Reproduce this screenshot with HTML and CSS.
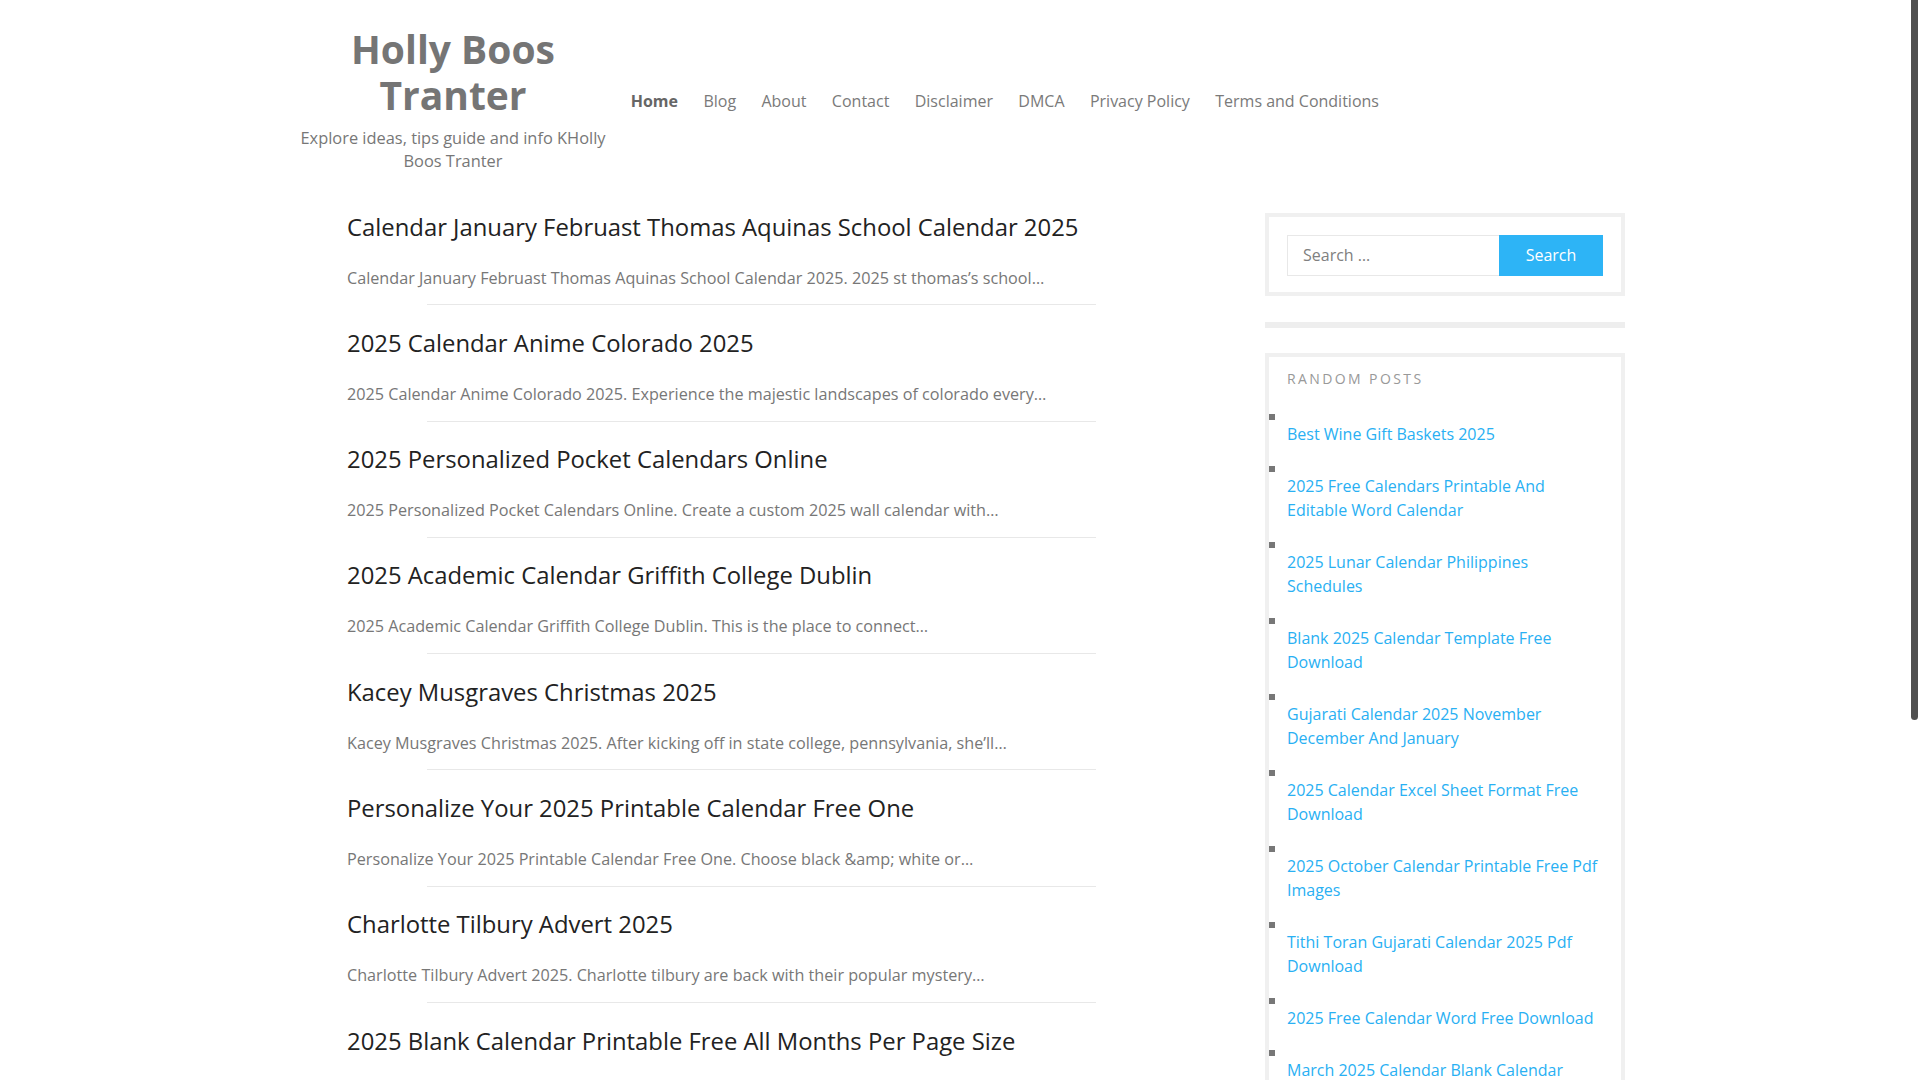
FILE: index.html
```html
<!DOCTYPE html>
<html lang="en">
<head>
<meta charset="utf-8">
<title>Holly Boos Tranter</title>
<link rel="stylesheet" href="styles.css">
</head>
<body>
<div class="scroll-thumb" aria-hidden="true"></div>
<div class="page">
  <header class="site-header">
    <div class="branding">
      <h1 class="site-title"><a href="#">Holly Boos Tranter</a></h1>
      <p class="site-desc">Explore ideas, tips guide and info KHolly Boos Tranter</p>
    </div>
    <nav class="main-nav">
      <ul>
        <li class="current"><a href="#">Home</a></li>
        <li><a href="#">Blog</a></li>
        <li><a href="#">About</a></li>
        <li><a href="#">Contact</a></li>
        <li><a href="#">Disclaimer</a></li>
        <li><a href="#">DMCA</a></li>
        <li><a href="#">Privacy Policy</a></li>
        <li><a href="#">Terms and Conditions</a></li>
      </ul>
    </nav>
  </header>

  <div class="content">
    <main class="posts">
      <article class="post">
        <h2 class="post-title"><a href="#">Calendar January Februast Thomas Aquinas School Calendar 2025</a></h2>
        <p class="excerpt">Calendar January Februast Thomas Aquinas School Calendar 2025. 2025 st thomas’s school…</p>
        <hr class="sep">
      </article>
      <article class="post">
        <h2 class="post-title"><a href="#">2025 Calendar Anime Colorado 2025</a></h2>
        <p class="excerpt">2025 Calendar Anime Colorado 2025. Experience the majestic landscapes of colorado every…</p>
        <hr class="sep">
      </article>
      <article class="post">
        <h2 class="post-title"><a href="#">2025 Personalized Pocket Calendars Online</a></h2>
        <p class="excerpt">2025 Personalized Pocket Calendars Online. Create a custom 2025 wall calendar with…</p>
        <hr class="sep">
      </article>
      <article class="post">
        <h2 class="post-title"><a href="#">2025 Academic Calendar Griffith College Dublin</a></h2>
        <p class="excerpt">2025 Academic Calendar Griffith College Dublin. This is the place to connect…</p>
        <hr class="sep">
      </article>
      <article class="post">
        <h2 class="post-title"><a href="#">Kacey Musgraves Christmas 2025</a></h2>
        <p class="excerpt">Kacey Musgraves Christmas 2025. After kicking off in state college, pennsylvania, she’ll…</p>
        <hr class="sep">
      </article>
      <article class="post">
        <h2 class="post-title"><a href="#">Personalize Your 2025 Printable Calendar Free One</a></h2>
        <p class="excerpt">Personalize Your 2025 Printable Calendar Free One. Choose black &amp;amp; white or…</p>
        <hr class="sep">
      </article>
      <article class="post">
        <h2 class="post-title"><a href="#">Charlotte Tilbury Advert 2025</a></h2>
        <p class="excerpt">Charlotte Tilbury Advert 2025. Charlotte tilbury are back with their popular mystery…</p>
        <hr class="sep">
      </article>
      <article class="post">
        <h2 class="post-title"><a href="#">2025 Blank Calendar Printable Free All Months Per Page Size</a></h2>
        <p class="excerpt">2025 Blank Calendar Printable Free All Months Per Page Size. Download a free printable…</p>
        <hr class="sep">
      </article>
      <article class="post">
        <h2 class="post-title"><a href="#">2025 Wall Calendar With Holidays Printable</a></h2>
        <p class="excerpt">2025 Wall Calendar With Holidays Printable. Plan your year ahead with our…</p>
        <hr class="sep">
      </article>
      <article class="post">
        <h2 class="post-title"><a href="#">Lunar Calendar 2025 Chinese New Year</a></h2>
        <p class="excerpt">Lunar Calendar 2025 Chinese New Year. The year of the snake begins on…</p>
        <hr class="sep">
      </article>
      <article class="post">
        <h2 class="post-title"><a href="#">2025 Monthly Planner Calendar Template</a></h2>
        <p class="excerpt">2025 Monthly Planner Calendar Template. Stay organized all year long with…</p>
        <hr class="sep">
      </article>
      <article class="post">
        <h2 class="post-title"><a href="#">School Holidays 2025 Calendar Victoria</a></h2>
        <p class="excerpt">School Holidays 2025 Calendar Victoria. Find the key dates for term…</p>
        <hr class="sep">
      </article>
    </main>

    <aside class="sidebar">
      <section class="widget search-widget">
        <form class="search-form">
          <input class="search-field" type="search" placeholder="Search …">
          <button class="search-submit" type="button">Search</button>
        </form>
      </section>
      <div class="widget-bar"></div>
      <section class="widget random-widget">
        <h3 class="widget-title">Random Posts</h3>
        <ul class="random-list">
          <li><a href="#">Best Wine Gift Baskets 2025</a></li>
          <li><a href="#">2025 Free Calendars Printable And Editable Word Calendar</a></li>
          <li><a href="#">2025 Lunar Calendar Philippines Schedules</a></li>
          <li><a href="#">Blank 2025 Calendar Template Free Download</a></li>
          <li><a href="#">Gujarati Calendar 2025 November December And January</a></li>
          <li><a href="#">2025 Calendar Excel Sheet Format Free Download</a></li>
          <li><a href="#">2025 October Calendar Printable Free Pdf Images</a></li>
          <li><a href="#">Tithi Toran Gujarati Calendar 2025 Pdf Download</a></li>
          <li><a href="#">2025 Free Calendar Word Free Download</a></li>
          <li><a href="#">March 2025 Calendar Blank Calendar Printable</a></li>
          <li><a href="#">2025 Printable Calendar With Week Numbers</a></li>
          <li><a href="#">Hindu Calendar 2025 With Festivals Pdf</a></li>
        </ul>
      </section>
    </aside>
  </div>
</div>
</body>
</html>
```

FILE: styles.css
```css
html {
  background: #fff;
}
body {
  margin: 0;
  padding-right: 12px;
  font-family: "Open Sans", "Noto Sans", "Liberation Sans", sans-serif;
  font-size: 16px;
  color: #777;
  background: #fff;
}
a {
  text-decoration: none;
  color: inherit;
}
.scroll-thumb {
  position: fixed;
  top: 0;
  right: 2px;
  width: 7px;
  height: 720px;
  background: #505050;
  border-radius: 0 0 4px 4px;
}
.page {
  width: 1342px;
  margin: 0 auto;
  padding-bottom: 20px;
}
.site-header {
  display: flex;
  align-items: flex-start;
  padding: 26px 0 0 5px;
}
.branding {
  width: 330px;
  text-align: center;
}
.site-title {
  margin: 0;
  font-size: 39px;
  line-height: 46px;
  font-weight: 700;
  color: #757575;
}
.site-desc {
  margin: 8px 0 0;
  font-size: 16.4px;
  line-height: 23px;
  color: #777;
}
.main-nav {
  padding-top: 63px;
}
.main-nav ul {
  display: flex;
  list-style: none;
  margin: 0;
  padding: 0;
}
.main-nav li a {
  display: block;
  padding: 0 12.7px;
  line-height: 24px;
  font-size: 16px;
  color: #7a7a7a;
}
.main-nav li.current a {
  font-weight: 700;
  color: #666;
}
.content {
  display: grid;
  grid-template-columns: 813px 360px;
  column-gap: 169px;
  align-items: start;
  margin-top: 37.5px;
}
.posts {
  padding-left: 64px;
}
.post-title {
  margin: 0;
  font-size: 23.85px;
  line-height: 34px;
  font-weight: 400;
  color: #222;
}
.excerpt {
  margin: 22px 0 0;
  font-size: 16.2px;
  line-height: 24px;
  color: #777;
}
.sep {
  border: 0;
  border-top: 1px solid #e8e8e8;
  margin: 14.8px 0 20.5px 80px;
  height: 0;
}
.sidebar {
  display: flex;
  flex-direction: column;
  margin-top: 3px;
}
.widget {
  border: 4px solid #f0f0f0;
}
.search-widget {
  padding: 18px 18px 16px;
}
.search-form {
  display: flex;
}
.search-field {
  flex: 1;
  min-width: 0;
  height: 41px;
  box-sizing: border-box;
  border: 1px solid #e8e8e8;
  border-right: 0;
  padding: 0 15px;
  font-family: inherit;
  font-size: 16px;
  color: #777;
  outline: none;
}
.search-field::placeholder {
  color: #808080;
}
.search-submit {
  width: 104px;
  height: 41px;
  border: 0;
  background: #2db4f6;
  color: #fff;
  font-family: inherit;
  font-size: 16px;
}
.widget-bar {
  height: 6px;
  background: #eee;
  margin: 26px 0 25px;
}
.random-widget {
  padding: 12.5px 18px 18px;
}
.widget-title {
  margin: 0;
  font-size: 14px;
  line-height: 20px;
  font-weight: 400;
  letter-spacing: 2.4px;
  text-transform: uppercase;
  color: #999;
}
.random-list {
  list-style: none;
  margin: 25px 0 0;
  padding: 0;
}
.random-list li {
  margin-bottom: 20px;
}
.random-list li::before {
  content: "";
  display: block;
  width: 6px;
  height: 6px;
  background: #777;
  margin: 0 0 2px -18px;
}
.random-list li a {
  display: block;
  line-height: 24px;
  font-size: 16px;
  color: #29b0f3;
}
```
